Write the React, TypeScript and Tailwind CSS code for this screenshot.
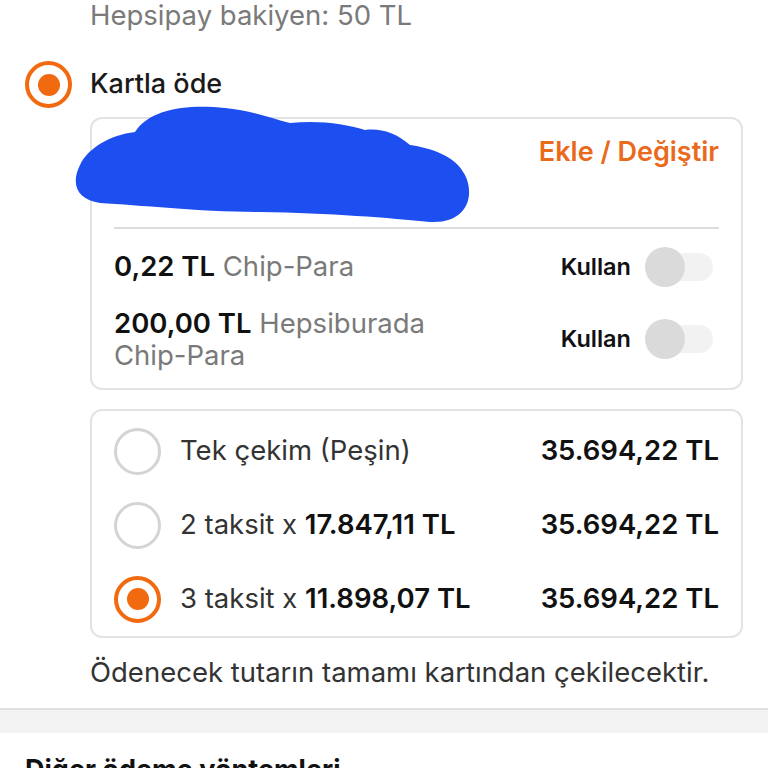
import React from "react";

function Radio({ checked }: { checked?: boolean }) {
  return checked ? (
    <div className="w-[47px] h-[47px] rounded-full border-[4px] border-[#f26a10] flex items-center justify-center shrink-0">
      <div className="w-[22px] h-[22px] rounded-full bg-[#f26a10]" />
    </div>
  ) : (
    <div className="w-[47px] h-[47px] rounded-full border-[3px] border-[#d4d4d4] shrink-0" />
  );
}

function Toggle() {
  return (
    <div className="relative w-[68px] h-[42px] flex items-center">
      <div className="absolute left-[4px] right-0 h-[28px] rounded-full bg-[#f2f2f2]" />
      <div className="relative w-[40px] h-[40px] rounded-full bg-[#dadada]" />
    </div>
  );
}

export default function App() {
  return (
    <div
      className="w-[768px] h-[768px] overflow-hidden bg-white relative text-[#1a1a1a]"
      style={{ fontFamily: "Inter, 'Noto Sans', sans-serif" }}
    >
      <div className="pl-[90px] h-[36px] flex items-start">
        <div className="text-[27.5px] leading-[30px] text-[#7a7a7a]">Hepsipay bakiyen: 50 TL</div>
      </div>

      <div className="flex items-center gap-[18px] pl-[25px] mt-[25px]">
        <Radio checked />
        <div className="text-[27px] font-medium text-[#1a1a1a]">Kartla öde</div>
      </div>

      <div className="ml-[90px] mr-[25px] mt-[9px] border-[2px] border-[#e3e3e3] rounded-[12px] px-[22px] relative">
        <div className="h-[108px] flex items-start justify-end pt-[13px]">
          <div className="text-[27px] font-semibold" style={{ color: "#ea6a1c" }}>Ekle / Değiştir</div>
        </div>
        <div className="h-[2px] bg-[#dcdcdc]" />
        <div className="flex items-center justify-between h-[72px] pt-[4px]">
          <div className="text-[27.5px]">
            <span className="font-semibold text-[#111]">0,22 TL</span>{" "}
            <span className="text-[#7a7a7a]">Chip-Para</span>
          </div>
          <div className="flex items-center gap-[14px] mr-[6px]">
            <span className="text-[23.5px] font-semibold text-[#111]">Kullan</span>
            <Toggle />
          </div>
        </div>
        <div className="flex items-center justify-between pb-[17px] pt-[6px]">
          <div className="text-[27.5px] leading-[32px] w-[340px]">
            <span className="font-semibold text-[#111]">200,00 TL</span>{" "}
            <span className="text-[#7a7a7a]">Hepsiburada Chip-Para</span>
          </div>
          <div className="flex items-center gap-[14px] mr-[6px]">
            <span className="text-[23.5px] font-semibold text-[#111]">Kullan</span>
            <Toggle />
          </div>
        </div>
      </div>

      <div className="ml-[90px] mr-[25px] mt-[19px] border-[2px] border-[#e3e3e3] rounded-[12px] pl-[22px] pr-[22px] pt-[3px] pb-[0px]">
        {[
          { label: <>Tek çekim (Peşin)</>, checked: false },
          { label: <>2 taksit x <span className="font-semibold text-[#111]">17.847,11 TL</span></>, checked: false },
          { label: <>3 taksit x <span className="font-semibold text-[#111]">11.898,07 TL</span></>, checked: true },
        ].map((r, i) => (
          <div key={i} className="flex items-center h-[74px]">
            <Radio checked={r.checked} />
            <div className="ml-[19px] text-[27.5px] text-[#333] flex-1">{r.label}</div>
            <div className="text-[27.5px] font-semibold text-[#111]">35.694,22 TL</div>
          </div>
        ))}
      </div>

      <div className="pl-[90px] mt-[16px] text-[27.5px] leading-[36px] text-[#333]">Ödenecek tutarın tamamı kartından çekilecektir.</div>

      <div className="mt-[18px] h-[25px] bg-[#f3f3f3] border-t-[2px] border-[#e0e0e0]" />
      <div className="pl-[25px] pt-[17px] text-[27px] font-bold text-[#111] whitespace-nowrap">Diğer ödeme yöntemleri</div>

      <svg className="absolute left-0 top-0 pointer-events-none" width="768" height="768">
        <path
          d="M80 165 C70 185 78 200 100 203 C140 205 200 212 260 212 C330 213 390 218 430 222 C468 224 475 195 465 175 C455 155 430 148 410 145 C395 132 380 128 365 130 C345 124 320 120 290 123 C270 118 250 110 225 108 C190 104 150 108 135 132 C110 135 88 148 80 165 Z"
          fill="#1d4ff0"
        />
      </svg>
    </div>
  );
}
